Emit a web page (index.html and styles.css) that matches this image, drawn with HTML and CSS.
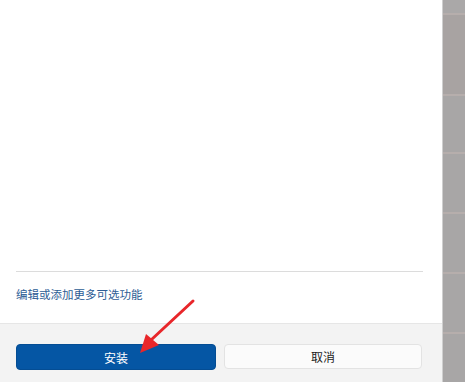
FILE: index.html
```html
<!DOCTYPE html>
<html lang="zh">
<head>
<meta charset="utf-8">
<link rel="stylesheet" href="styles.css">
</head>
<body>
<div class="screen">
  <div class="dialog">
    <div class="content">
      <div class="spacer"></div>
      <div class="divider"></div>
      <a class="link" href="#">编辑或添加更多可选功能</a>
    </div>
    <div class="footer">
      <button class="btn primary">安装</button>
      <button class="btn secondary">取消</button>
    </div>
  </div>
  <div class="side">
    <div class="band b0"></div>
    <div class="band b1"></div>
    <div class="band b2"></div>
    <div class="band b3"></div>
    <div class="band b4"></div>
    <div class="band b5"></div>
    <div class="band b6"></div>
  </div>
  <svg class="arrow" width="80" height="70" viewBox="0 0 80 70">
    <line x1="60" y1="3" x2="18" y2="42" stroke="#e8262a" stroke-width="3" stroke-linecap="round"/>
    <polygon points="7,55 13,36 26,47" fill="#e8262a"/>
  </svg>
</div>
</body>
</html>
```
FILE: styles.css
```css
html, body {
  margin: 0;
  padding: 0;
}
body {
  width: 465px;
  height: 382px;
  overflow: hidden;
  font-family: "Noto Sans CJK SC", "Microsoft YaHei", sans-serif;
}
.screen {
  position: relative;
  display: flex;
  width: 465px;
  height: 382px;
}
.dialog {
  width: 442px;
  display: flex;
  flex-direction: column;
  border-right: 1px solid #cfcfcf;
}
.content {
  flex: 1;
  background: #ffffff;
  padding: 0 19px 0 16px;
  display: flex;
  flex-direction: column;
}
.spacer {
  height: 271px;
}
.divider {
  height: 1px;
  background: #dcdcdc;
}
.link {
  margin-top: 14px;
  font-size: 11.5px;
  line-height: 16px;
  color: #2d5d95;
  text-decoration: none;
}
.footer {
  height: 59px;
  background: #f3f3f3;
  border-top: 1px solid #e6e6e6;
  display: flex;
  gap: 8px;
  padding: 20px 20px 0 16px;
  box-sizing: border-box;
  align-items: flex-start;
}
.btn {
  font-family: "Noto Sans CJK SC", sans-serif;
  font-size: 12px;
  height: 26px;
  border-radius: 4px;
  padding: 0;
  cursor: pointer;
}
.primary {
  width: 200px;
  background: #0556a4;
  color: #ffffff;
  border: 1px solid #044d94;
}
.secondary {
  width: 198px;
  height: 25px;
  background: #fbfbfb;
  color: #1b1b1b;
  border: 1px solid #e3e3e3;
}
.side {
  flex: 1;
  display: flex;
  flex-direction: column;
  background: #a8a6a6;
}
.band {
  border-bottom: 2px solid #b6aeac;
  box-sizing: border-box;
}
.b0 { height: 15px; background: #aaa8a8; }
.b1 { height: 81px; background: #a8a3a2; }
.b2 { height: 58px; }
.b3 { height: 60px; }
.b4 { height: 60px; }
.b5 { height: 60px; }
.b6 { flex: 1; border-bottom: none; }
.arrow {
  position: absolute;
  left: 133px;
  top: 298px;
}
```
